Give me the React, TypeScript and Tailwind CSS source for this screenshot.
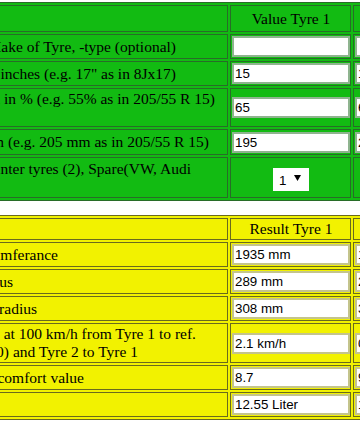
import React from "react";

type Line = { text: string; pr: string };

function LabelCell({ lines, h, border }: { lines: Line[]; h: string; border: string }) {
  return (
    <div className={`${h} ${border} border p-[1px] flex flex-col justify-center overflow-hidden`}>
      {lines.map((l, i) => (
        <div key={i} className={`flex justify-end whitespace-nowrap leading-[18px] h-[18px] ${l.pr}`}>
          <span>{l.text}</span>
        </div>
      ))}
    </div>
  );
}

function ValueCell({ children, h, border }: { children?: React.ReactNode; h: string; border: string }) {
  return (
    <div className={`${h} ${border} border py-[1px] pl-[1px] pr-0 flex items-center justify-center`}>{children}</div>
  );
}

function Field({ value, tone }: { value: string; tone: "green" | "yellow" }) {
  const b = tone === "green" ? "border-[#8fb48f]" : "border-[#c4c48c]";
  return (
    <input
      readOnly
      value={value}
      className={`w-full h-[21px] border-2 ${b} bg-white px-[1px] font-['Liberation_Sans',Arial,sans-serif] text-[13.333px] text-black outline-none`}
    />
  );
}

function Select() {
  return (
    <div className="relative w-[36px] h-[20px] bg-white">
      <select className="appearance-none w-full h-full bg-white pl-[6px] font-['Liberation_Sans',Arial,sans-serif] text-[13.333px] text-black outline-none">
        <option>1</option>
        <option>2</option>
        <option>4</option>
      </select>
      <svg className="absolute right-[8px] top-[7px] pointer-events-none" width="7" height="6" viewBox="0 0 7 6">
        <path d="M0 0H7L3.5 6Z" fill="#000" />
      </svg>
    </div>
  );
}

const GB = "border-[#286c28]";
const YB = "border-[#6a6a1e]";

export default function App() {
  const greenRows: { lines: Line[]; h: string; v1: React.ReactNode; v2: React.ReactNode }[] = [
    {
      lines: [{ text: "Make of Tyre, -type (optional)", pr: "pr-[50px]" }],
      h: "h-[25px]",
      v1: <Field tone="green" value="" />,
      v2: <Field tone="green" value="" />,
    },
    {
      lines: [{ text: 'Rim diameter in inches (e.g. 17" as in 8Jx17)', pr: "pr-[50px]" }],
      h: "h-[25px]",
      v1: <Field tone="green" value="15" />,
      v2: <Field tone="green" value="16" />,
    },
    {
      lines: [
        { text: "Aspect ratio height/width in % (e.g. 55% as in 205/55 R 15)", pr: "pr-[11px]" },
        { text: "", pr: "pr-[0px]" },
      ],
      h: "h-[39px]",
      v1: <Field tone="green" value="65" />,
      v2: <Field tone="green" value="60" />,
    },
    {
      lines: [{ text: "Tyre width in mm (e.g. 205 mm as in 205/55 R 15)", pr: "pr-[17px]" }],
      h: "h-[26px]",
      v1: <Field tone="green" value="195" />,
      v2: <Field tone="green" value="215" />,
    },
    {
      lines: [
        { text: "Number of tyres: Summer or winter tyres (2), Spare(VW, Audi", pr: "pr-[35px]" },
        { text: "", pr: "pr-[0px]" },
      ],
      h: "h-[41px]",
      v1: <Select />,
      v2: <Select />,
    },
  ];

  const yellowRows: { lines: Line[]; h: string; v1: string; v2: string }[] = [
    { lines: [{ text: "Tyre circumferance", pr: "pr-[168px]" }], h: "h-[25px]", v1: "1935 mm", v2: "1992 mm" },
    { lines: [{ text: "Tyre radius", pr: "pr-[213px]" }], h: "h-[25px]", v1: "289 mm", v2: "298 mm" },
    { lines: [{ text: "Rolling radius", pr: "pr-[189px]" }], h: "h-[25px]", v1: "308 mm", v2: "317 mm" },
    {
      lines: [
        { text: "Speed deviation at 100 km/h from Tyre 1 to ref.", pr: "pr-[30px]" },
        { text: "(ref. = 100) and Tyre 2 to Tyre 1", pr: "pr-[88px]" },
      ],
      h: "h-[40px]",
      v1: "2.1 km/h",
      v2: "0 km/h",
    },
    { lines: [{ text: "Driving comfort value", pr: "pr-[142px]" }], h: "h-[25px]", v1: "8.7", v2: "9.1" },
    { lines: [{ text: "Fuel consumption", pr: "pr-[240px]" }], h: "h-[25px]", v1: "12.55 Liter", v2: "12.91 Liter" },
  ];

  return (
    <div className="w-[360px] h-[426px] overflow-hidden bg-white font-['Liberation_Serif','Times_New_Roman',serif] text-[15.5px] text-black">
      <div className="pt-[2px]">
        <div className={`w-max ml-[-100px] grid grid-cols-[325px_121px_121px] gap-[2px] p-[2px] border ${GB} bg-[#12bb12]`}>
          <LabelCell lines={[]} h="h-[27px]" border={GB} />
          <ValueCell h="h-[27px]" border={GB}>
            <span className="leading-[18px]">Value Tyre 1</span>
          </ValueCell>
          <ValueCell h="h-[27px]" border={GB}>
            <span className="leading-[18px]">Value Tyre 2</span>
          </ValueCell>
          {greenRows.map((r, i) => (
            <React.Fragment key={i}>
              <LabelCell lines={r.lines} h={r.h} border={GB} />
              <ValueCell h={r.h} border={GB}>{r.v1}</ValueCell>
              <ValueCell h={r.h} border={GB}>{r.v2}</ValueCell>
            </React.Fragment>
          ))}
        </div>

        <div className={`mt-[14px] w-max ml-[-100px] grid grid-cols-[325px_121px_121px] gap-[2px] p-[2px] border ${YB} bg-[#f2f200]`}>
          <LabelCell lines={[]} h="h-[22px]" border={YB} />
          <ValueCell h="h-[22px]" border={YB}>
            <span className="leading-[18px]">Result Tyre 1</span>
          </ValueCell>
          <ValueCell h="h-[22px]" border={YB}>
            <span className="leading-[18px]">Result Tyre 2</span>
          </ValueCell>
          {yellowRows.map((r, i) => (
            <React.Fragment key={i}>
              <LabelCell lines={r.lines} h={r.h} border={YB} />
              <ValueCell h={r.h} border={YB}>
                <Field tone="yellow" value={r.v1} />
              </ValueCell>
              <ValueCell h={r.h} border={YB}>
                <Field tone="yellow" value={r.v2} />
              </ValueCell>
            </React.Fragment>
          ))}
        </div>
      </div>
    </div>
  );
}
